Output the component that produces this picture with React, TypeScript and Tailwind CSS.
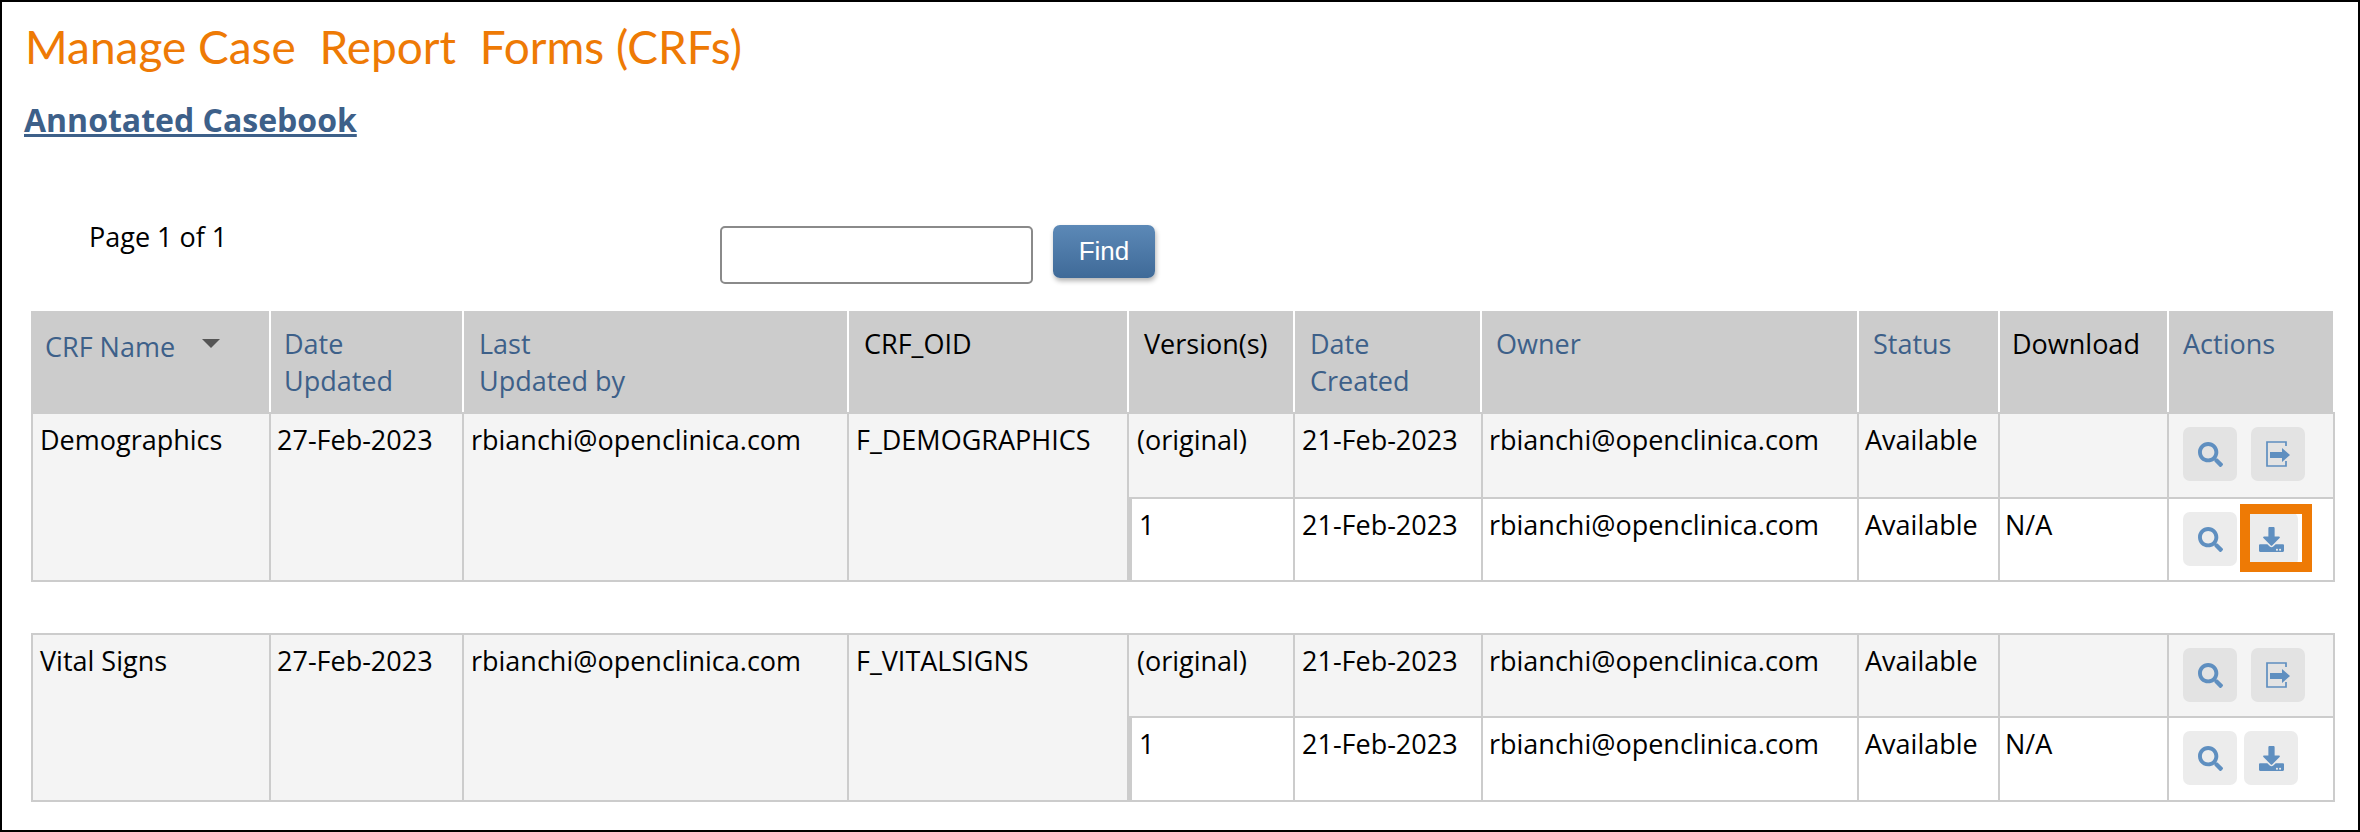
import React from "react";
import { FaSearch, FaDownload } from "react-icons/fa";

const widths = [238, 193, 385, 280, 166, 188, 376, 141, 169, 166];
const headWidths = [240, 193, 385, 280, 166, 187, 377, 141, 169, 164];

function Cols({ list }: { list: number[] }) {
  return (
    <colgroup>
      {list.map((w, i) => (
        <col key={i} style={{ width: w }} />
      ))}
    </colgroup>
  );
}

function ExportIcon() {
  return (
    <svg width="24" height="26" viewBox="0 0 24 26" fill="none" className="text-[#5f8fc0]">
      <path d="M20 5V1H1v24h19v-5" stroke="currentColor" strokeWidth="1.7" />
      <path d="M4 11h12V7l8 7-8 7v-4H4z" fill="currentColor" />
    </svg>
  );
}

function IconButton({ children, light }: { children: React.ReactNode; light?: boolean }) {
  return (
    <span
      className={
        "flex h-[54px] w-[54px] items-center justify-center rounded-[7px] text-[#5f8fc0] " +
        (light ? "bg-[#ececec]" : "bg-[#e3e3e3]")
      }
    >
      {children}
    </span>
  );
}

const cell = "border-r-2 border-b-2 border-[#cccccc] align-top text-left font-normal";

function HeaderCell({ children, black, className }: { children: React.ReactNode; black?: boolean; className?: string }) {
  return (
    <th
      className={
        "border-r-2 border-white bg-[#cccccc] pt-[14px] pr-1 align-top text-left font-normal leading-[37px] last:border-r-0 " +
        (black ? "text-black " : "text-[#3d6089] ") +
        (className || "pl-[15px]")
      }
    >
      {children}
    </th>
  );
}

function CrfTable({
  name,
  oid,
  updated,
  highlight,
  firstRowClass,
  secondRowClass,
}: {
  name: string;
  oid: string;
  updated: string;
  highlight?: boolean;
  firstRowClass: string;
  secondRowClass: string;
}) {
  return (
    <table className="w-[2302px] table-fixed border-separate border-spacing-0 border-t-2 border-l-2 border-[#cccccc] text-[27px] leading-[36px] text-black">
      <Cols list={widths} />
      <tbody>
        <tr className={firstRowClass}>
          <td rowSpan={2} className={cell + " bg-[#f4f4f4] pt-[8px] pl-[7px]"}>{name}</td>
          <td rowSpan={2} className={cell + " bg-[#f4f4f4] pt-[8px] pl-[6px]"}>{updated}</td>
          <td rowSpan={2} className={cell + " bg-[#f4f4f4] pt-[8px] pl-[7px]"}>rbianchi@openclinica.com</td>
          <td rowSpan={2} className={cell + " bg-[#f4f4f4] pt-[8px] pl-[7px]"}>{oid}</td>
          <td className={cell + " bg-[#f4f4f4] pt-[8px] pl-[8px]"}>(original)</td>
          <td className={cell + " bg-[#f4f4f4] pt-[8px] pl-[7px]"}>21-Feb-2023</td>
          <td className={cell + " bg-[#f4f4f4] pt-[8px] pl-[6px]"}>rbianchi@openclinica.com</td>
          <td className={cell + " bg-[#f4f4f4] pt-[8px] pl-[6px]"}>Available</td>
          <td className={cell + " bg-[#f4f4f4]"}></td>
          <td className={cell + " bg-[#f4f4f4] pt-[13px] pl-[14px]"}>
            <span className="flex gap-[14px]">
              <IconButton><FaSearch size={25} /></IconButton>
              <IconButton><ExportIcon /></IconButton>
            </span>
          </td>
        </tr>
        <tr className={secondRowClass}>
          <td className={cell + " border-l-[3px] bg-white pt-[8px] pl-[7px]"}>1</td>
          <td className={cell + " bg-white pt-[8px] pl-[7px]"}>21-Feb-2023</td>
          <td className={cell + " bg-white pt-[8px] pl-[6px]"}>rbianchi@openclinica.com</td>
          <td className={cell + " bg-white pt-[8px] pl-[6px]"}>Available</td>
          <td className={cell + " bg-white pt-[8px] pl-[5px]"}>N/A</td>
          <td className={cell + " bg-white pt-[13px] pl-[14px]"}>
            <span className="relative flex gap-[7px]">
              <IconButton light><FaSearch size={25} /></IconButton>
              <IconButton light><FaDownload size={25} /></IconButton>
              {highlight && (
                <span className="absolute top-[-8px] left-[57px] h-[68px] w-[72px] border-[10px] border-[#ee7a05]" />
              )}
            </span>
          </td>
        </tr>
      </tbody>
    </table>
  );
}

export default function App() {
  return (
    <div className="h-[832px] w-[2360px] overflow-hidden border-2 border-black bg-white font-['Open_Sans',sans-serif] text-[27px] text-black">
      <h1 className="ml-[23px] mt-[20px] h-[50px] whitespace-pre font-['Lato',sans-serif] text-[46px] leading-[50px] font-normal text-[#ee7a05]">
        {"Manage Case  Report  Forms (CRFs)"}
      </h1>
      <a href="#" className="ml-[22px] mt-[28px] block w-fit text-[32px] leading-[40px] font-bold text-[#3d6089] underline">
        Annotated Casebook
      </a>
      <div className="mt-[86px] flex h-[87px] items-start">
        <div className="ml-[87px] mt-[-8px] w-[631px] text-[27px] leading-[38px]">Page 1 of 1</div>
        <input className="h-[58px] w-[313px] rounded-[5px] border-2 border-[#8a8a8a] bg-white" />
        <button className="ml-[20px] mt-[-1px] h-[53px] w-[102px] rounded-[7px] bg-gradient-to-b from-[#5c89b7] to-[#3f6a98] font-['Liberation_Sans',sans-serif] text-[26px] font-normal text-white shadow-[1px_3px_5px_rgba(0,0,0,0.3)]">
          Find
        </button>
      </div>
      <div className="ml-[29px] mt-[-2px] w-[2302px]">
        <table className="w-[2302px] table-fixed border-separate border-spacing-0 text-[27px]">
          <Cols list={headWidths} />
          <thead>
            <tr className="h-[101px]">
              <HeaderCell className="pl-[14px]">
                <span className="flex items-center gap-[27px] pt-[3px]">
                  CRF Name
                  <svg width="18" height="9" viewBox="0 0 18 9" className="mb-[6px]"><path d="M0 0h18L9 9z" fill="#555555" /></svg>
                </span>
              </HeaderCell>
              <HeaderCell className="pl-[13px]">Date<br />Updated</HeaderCell>
              <HeaderCell>Last<br />Updated by</HeaderCell>
              <HeaderCell black>CRF_OID</HeaderCell>
              <HeaderCell black>Version(s)</HeaderCell>
              <HeaderCell>Date<br />Created</HeaderCell>
              <HeaderCell className="pl-[14px]">Owner</HeaderCell>
              <HeaderCell className="pl-[14px]">Status</HeaderCell>
              <HeaderCell black className="pl-[12px]">Download</HeaderCell>
              <HeaderCell className="pl-[14px]">Actions</HeaderCell>
            </tr>
          </thead>
        </table>
        <CrfTable name="Demographics" oid="F_DEMOGRAPHICS" updated="27-Feb-2023" highlight firstRowClass="h-[85px]" secondRowClass="h-[83px]" />
        <div className="h-[51px]" />
        <CrfTable name="Vital Signs" oid="F_VITALSIGNS" updated="27-Feb-2023" firstRowClass="h-[83px]" secondRowClass="h-[84px]" />
      </div>
    </div>
  );
}
